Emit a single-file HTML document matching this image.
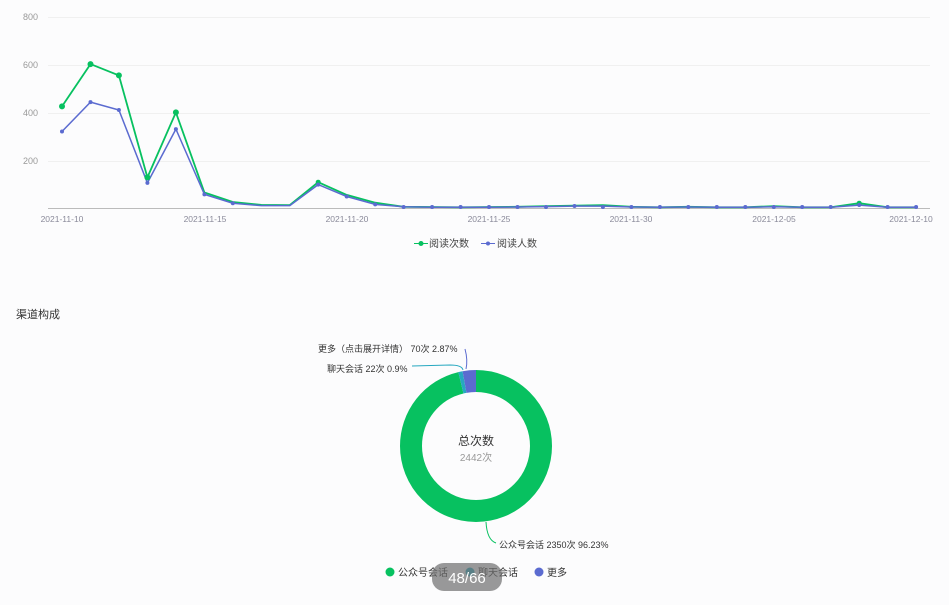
<!DOCTYPE html>
<html><head><meta charset="utf-8"><style>
body{margin:0;width:949px;height:605px;background:#fcfcfd;font-family:"Liberation Sans","Noto Sans CJK SC",sans-serif;overflow:hidden;position:relative}
.t{position:absolute;white-space:nowrap}
</style></head><body>
<svg width="949" height="605" style="position:absolute;left:0;top:0" font-family="Liberation Sans, Noto Sans CJK SC, sans-serif">
<g stroke="#f0f0f0" stroke-width="1">
<line x1="48" y1="17.5" x2="930" y2="17.5"/><line x1="48" y1="65.5" x2="930" y2="65.5"/><line x1="48" y1="113.5" x2="930" y2="113.5"/><line x1="48" y1="161.5" x2="930" y2="161.5"/>
</g>
<line x1="48" y1="208.5" x2="930" y2="208.5" stroke="#bbb"/>
<g fill="#999" font-size="9" text-anchor="end">
<text x="38" y="20">800</text><text x="38" y="68">600</text><text x="38" y="116">400</text><text x="38" y="164">200</text>
</g>
<g fill="#8a8a9a" font-size="8.5" text-anchor="middle">
<text x="62" y="222">2021-11-10</text><text x="205" y="222">2021-11-15</text><text x="347" y="222">2021-11-20</text><text x="489" y="222">2021-11-25</text><text x="631" y="222">2021-11-30</text><text x="774" y="222">2021-12-05</text><text x="911" y="222">2021-12-10</text>
</g>
<polyline fill="none" stroke="#07c160" stroke-width="1.8" points="62,106.4 90.5,64.1 118.9,75.4 147.4,177.4 175.9,112.4 204.4,192.5 232.8,202 261.3,204.9 289.8,205.1 318.2,182.2 346.7,194.9 375.2,202.7 403.6,206.8 432.1,207 460.6,207.3 489,207 517.5,206.8 546,206.1 574.5,205.6 602.9,205.1 631.4,206.8 659.9,207.3 688.3,206.8 716.8,207.3 745.3,207.3 773.8,206.1 802.2,207.3 830.7,207.3 859.2,203.2 887.6,207.3 916.1,207.3"/>
<polyline fill="none" stroke="#5b6bd0" stroke-width="1.5" points="62,131.5 90.5,102.1 118.9,110 147.4,182.9 175.9,129.1 204.4,194.4 232.8,203.2 261.3,205.6 289.8,205.6 318.2,184.6 346.7,196.5 375.2,204.4 403.6,206.8 432.1,207.3 460.6,207.3 489,207.3 517.5,207 546,206.6 574.5,206.1 602.9,206.1 631.4,207 659.9,207.3 688.3,207 716.8,207.3 745.3,207.3 773.8,206.8 802.2,207.3 830.7,207.3 859.2,205.1 887.6,207.3 916.1,207.3"/>
<g fill="#07c160"><circle cx="62" cy="106.4" r="3"/><circle cx="90.5" cy="64.1" r="3"/><circle cx="118.9" cy="75.4" r="3"/><circle cx="147.4" cy="177.4" r="3"/><circle cx="175.9" cy="112.4" r="3"/><circle cx="318.2" cy="182.2" r="2.5"/><circle cx="859.2" cy="203.2" r="2.5"/></g>
<g fill="#5b6bd0"><circle cx="62" cy="131.5" r="2"/><circle cx="90.5" cy="102.1" r="2"/><circle cx="118.9" cy="110" r="2"/><circle cx="147.4" cy="182.9" r="2"/><circle cx="175.9" cy="129.1" r="2"/><circle cx="204.4" cy="194.4" r="2"/><circle cx="232.8" cy="203.2" r="2"/><circle cx="318.2" cy="184.6" r="2"/><circle cx="346.7" cy="196.5" r="2"/><circle cx="375.2" cy="204.4" r="2"/><circle cx="403.6" cy="207" r="2"/><circle cx="432.1" cy="207" r="2"/><circle cx="460.6" cy="207" r="2"/><circle cx="489" cy="207" r="2"/><circle cx="517.5" cy="207" r="2"/><circle cx="546" cy="207" r="2"/><circle cx="574.5" cy="206" r="2"/><circle cx="602.9" cy="207" r="2"/><circle cx="631.4" cy="207" r="2"/><circle cx="659.9" cy="207" r="2"/><circle cx="688.3" cy="207" r="2"/><circle cx="716.8" cy="207" r="2"/><circle cx="745.3" cy="207" r="2"/><circle cx="773.8" cy="207" r="2"/><circle cx="802.2" cy="207" r="2"/><circle cx="830.7" cy="207" r="2"/><circle cx="859.2" cy="205" r="2"/><circle cx="887.6" cy="207" r="2"/><circle cx="916.1" cy="207" r="2"/></g>
<line x1="414" y1="243.5" x2="428" y2="243.5" stroke="#07c160"/><circle cx="421" cy="243.5" r="2.5" fill="#07c160"/>
<text x="429" y="247" font-size="10" fill="#444">阅读次数</text>
<line x1="481" y1="243.5" x2="495" y2="243.5" stroke="#5b6bd0"/><circle cx="488" cy="243.5" r="2" fill="#5b6bd0"/>
<text x="497" y="247" font-size="10" fill="#444">阅读人数</text>
<text x="16" y="318" font-size="11" fill="#333">渠道构成</text>
<g transform="rotate(-90 476 446)" fill="none" stroke-width="22">
<circle cx="476" cy="446" r="65" stroke="#07c160" stroke-dasharray="393 100"/>
<circle cx="476" cy="446" r="65" stroke="#27a8c0" stroke-dasharray="0 393 3.68 400"/>
<circle cx="476" cy="446" r="65" stroke="#5b6bd0" stroke-dasharray="0 396.7 11.7 400"/>
</g>
<text x="476" y="445" font-size="12" fill="#333" text-anchor="middle">总次数</text>
<text x="476" y="461" font-size="10" fill="#999" text-anchor="middle">2442次</text>
<path d="M466,369 Q468,360 465,349" stroke="#5b6bd0" fill="none"/>
<path d="M463,370 Q462,365 450,365 L412,366" stroke="#27a8c0" fill="none"/>
<path d="M486,522 Q487,540 496,543" stroke="#07c160" fill="none"/>
<text x="318" y="352" font-size="9" fill="#333">更多（点击展开详情） 70次 2.87%</text>
<text x="327" y="372" font-size="9" fill="#333">聊天会话 22次 0.9%</text>
<text x="499" y="548" font-size="9" fill="#333">公众号会话 2350次 96.23%</text>
<circle cx="390" cy="572" r="4.5" fill="#07c160"/><text x="398" y="576" font-size="10" fill="#333">公众号会话</text>
<circle cx="470" cy="572" r="4.5" fill="#27a8c0"/><text x="478" y="576" font-size="10" fill="#333">聊天会话</text>
<circle cx="539" cy="572" r="4.5" fill="#5b6bd0"/><text x="547" y="576" font-size="10" fill="#333">更多</text>
<rect x="432" y="563" width="70" height="28" rx="12" fill="rgba(110,110,110,0.7)"/>
<text x="467" y="583" font-size="15" fill="#fff" text-anchor="middle">48/66</text>
</svg>
</body></html>
